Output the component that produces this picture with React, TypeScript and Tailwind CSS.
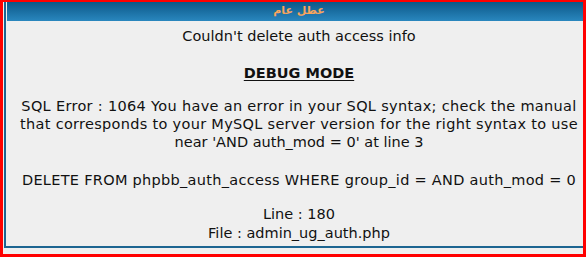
import React from "react";

export default function App() {
  const line = "leading-[18px] whitespace-nowrap";
  return (
    <div className="w-[586px] h-[257px] bg-[#ff0000] pt-[2px] pl-[3px] pr-[3px] pb-[3px] overflow-hidden">
      <div className="h-full bg-[#efefef] overflow-hidden pl-px">
        <div className="w-[588px] h-[246px] border-l-2 border-b-2 border-[#1d6591] pl-px pr-px pb-px flex flex-col">
          <div
            className="h-[19px] flex items-center justify-center text-[11px] font-bold text-[#f9a55c] bg-gradient-to-b from-[#0b5888] to-[#2987be]"
            style={{ fontFamily: '"DejaVu Sans", Tahoma, sans-serif' }}
          >
            <span dir="rtl">عطل عام</span>
          </div>
          <div
            className="mt-px flex-1 bg-[#efefef] flex flex-col items-center pt-[5px] text-[14.5px] text-[#111111]"
            style={{ fontFamily: '"DejaVu Sans", sans-serif' }}
          >
            <div className={line}>Couldn't delete auth access info</div>
            <div className={`${line} mt-[19px] font-bold underline underline-offset-2`}>DEBUG MODE</div>
            <div className={`${line} mt-[15px] tracking-[0.32px]`}>SQL Error : 1064 You have an error in your SQL syntax; check the manual</div>
            <div className={`${line} tracking-[0.3px]`}>that corresponds to your MySQL server version for the right syntax to use</div>
            <div className={line}>near 'AND auth_mod = 0' at line 3</div>
            <div className={`${line} mt-[20px] tracking-[0.29px]`}>DELETE FROM phpbb_auth_access WHERE group_id = AND auth_mod = 0</div>
            <div className={`${line} mt-[16px]`}>Line : 180</div>
            <div className={`${line} mt-px`}>File : admin_ug_auth.php</div>
          </div>
        </div>
      </div>
    </div>
  );
}
